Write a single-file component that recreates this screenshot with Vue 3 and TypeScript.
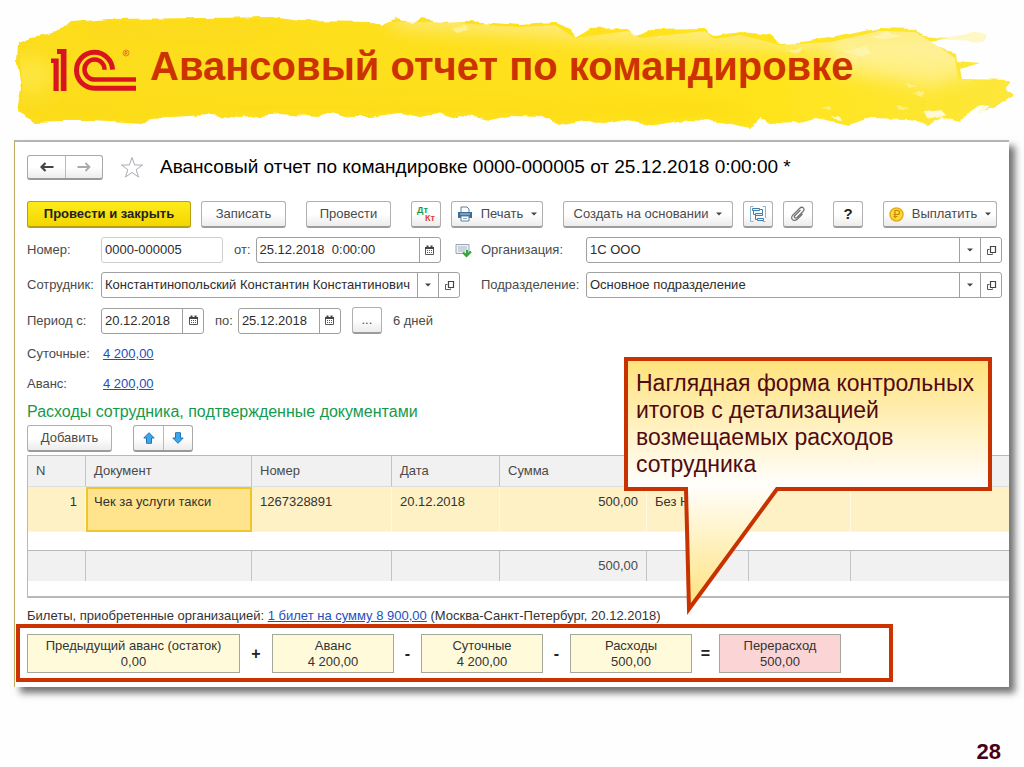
<script setup lang="ts">
import { ref } from 'vue'

interface Term {
  label: string
  value: string
  sign?: string
  over?: boolean
}

const docNumber = ref('0000-000005')
const docDate = ref('25.12.2018  0:00:00')
const employee = ref('Константинопольский Константин Константинович')
const organization = ref('1С ООО')
const department = ref('Основное подразделение')
const dateFrom = ref('20.12.2018')
const dateTo = ref('25.12.2018')

const terms: Term[] = [
  { label: 'Предыдущий аванс (остаток)', value: '0,00', sign: '+' },
  { label: 'Аванс', value: '4 200,00', sign: '-' },
  { label: 'Суточные', value: '4 200,00', sign: '-' },
  { label: 'Расходы', value: '500,00', sign: '=' },
  { label: 'Перерасход', value: '500,00', over: true },
]
</script>

<template>
  <main class="slide">
    <svg class="defs" width="0" height="0" aria-hidden="true">
      <symbol id="calendar" viewBox="0 0 11 11">
        <path d="M1.500 2.500h8v7h-8z" fill="#fff" stroke="#555" />
        <path d="M1 2h9v2H1zM2.500 0.500h2v2h-2zM6.500 0.500h2v2h-2z" fill="#444" />
        <path d="M3 5.500h5M3 7.500h5" stroke="#555" stroke-dasharray="1 1" />
      </symbol>
      <symbol id="open" viewBox="0 0 11 11">
        <path d="M4.500 1.500h5v6h-5z" fill="none" stroke="#444" stroke-width="1.200" />
        <path d="M3.500 4.500H1.500v5h5V8.500" fill="none" stroke="#555" />
      </symbol>
      <symbol id="caret" viewBox="0 0 6 4">
        <path d="M0 0.500h6L3 3.500z" fill="#444" />
      </symbol>
    </svg>

    <header class="banner">
      <svg class="brush" viewBox="0 0 1024 140" preserveAspectRatio="none" aria-hidden="true">
        <defs>
          <linearGradient id="paint" x1="0" y1="0" x2="1" y2="0">
            <stop offset="0" stop-color="#fcdd1c" />
            <stop offset="0.500" stop-color="#fee01a" />
            <stop offset="0.750" stop-color="#ffe41c" />
            <stop offset="1" stop-color="#fde73a" />
          </linearGradient>
          <filter id="rough" x="-2%" y="-10%" width="104%" height="120%">
            <feTurbulence type="fractalNoise" baseFrequency="0.060" numOctaves="2" seed="4" result="n" />
            <feDisplacementMap in="SourceGraphic" in2="n" scale="6" xChannelSelector="R" yChannelSelector="G" />
            <feGaussianBlur stdDeviation="0.700" />
          </filter>
          <filter id="soft" filterUnits="userSpaceOnUse" x="-60" y="-60" width="1144" height="260">
            <feGaussianBlur stdDeviation="9" />
          </filter>
          <clipPath id="stroke-area">
            <path d="M20 44L32 39L60 34L72 24L110 21L200 20L272 19L300 23L374 24L396 22L440 22L520 27L555 25L575 38L628 31L640 38L705 31L714 39L740 35L780 45L830 42L880 31L915 32L938 46L955 58L958 79L1004 84L1006 94L975 108L925 117L870 115L800 119L765 117L750 124L690 117L655 122L600 117L560 121L510 113L460 112L370 112L330 109L240 111L150 114L143 120L90 118L37 119L20 110L23 88L20 62z" />
          </clipPath>
        </defs>
        <g filter="url(#rough)">
          <path
            fill="url(#paint)"
            d="M18 42L30 37L58 32L70 22L110 19L200 18L272 17L300 21L374 22L380 25L396 18L414 24L422 19L440 22L470 21L520 25L555 23L568 28L575 37L582 34L590 29L628 28L634 37L641 36L650 29L705 28L714 36L740 32L772 35L780 43L800 42L830 38L880 28L915 29L922 36L950 38L930 42L940 48L955 53L956 61L980 63L960 69L962 79L1012 80L1006 89L1014 95L995 107L978 113L984 105L970 112L960 121L940 116L928 125L905 119L870 118L850 125L815 118L800 122L770 123L760 118L750 128L720 122L690 120L655 126L620 120L600 124L585 120L560 125L545 117L510 116L490 120L460 115L452 118L440 113L420 117L400 113L370 117L350 117L330 112L318 117L280 114L240 118L210 115L150 118L143 124L110 122L90 121L60 121L35 122L17 112L21 88L17 62z"
          />
          <path fill="#fdf3a0" opacity="0.600" d="M935 39L980 32L987 35L984 42L955 40z" />
          <path fill="#fff" opacity="0.800" d="M978 105L990 106L982 113L968 117zM925 112L942 110L946 114L928 119zM830 117L840 115L842 119zM870 36L885 32L902 36L884 39z" />
        </g>
        <g clip-path="url(#stroke-area)">
          <g filter="url(#soft)">
            <path fill="#fdf0a0" opacity="0.700" d="M380 10H980V60L850 56L760 48L620 42L500 34L400 28z" />
            <path fill="#fff4a6" opacity="0.700" d="M830 40L945 40L985 70L930 86L840 72z" />
            <path fill="#f9cf16" opacity="0.350" d="M30 106H460L720 104L770 116H30zM80 24H300L250 40H90z" />
            <path fill="#fff06a" opacity="0.500" d="M10 60H50V90H10z" />
          </g>
          <path filter="url(#rough)" fill="#fff7bd" opacity="0.600" d="M657 31l8 3-6 4zM785 50l18-3-4 6zM845 52l20-5 8 5-18 5zM906 82l12 4-8 2zM911 95l14-3-4 5zM895 106l14 2-10 3zM820 108l10-2 1 4zM452 28l14-4 2 6-11 3z" />
        </g>
      </svg>
      <svg class="logo" viewBox="0 0 86 44" role="img" aria-label="1С">
        <path fill="#d8151f" d="M1 9.500H8.700V42H3.500V14H1zM7 0H16.500V42H10.800V5H7z" />
        <g fill="none" stroke="#d8151f">
          <path stroke-width="5" d="M62.500 20.700A18 18 0 1 0 44.500 39.300H86" />
          <path stroke-width="4.500" d="M54.500 20.700A10 10 0 1 0 44.500 30.500H86" />
        </g>
        <circle cx="76" cy="4" r="3" fill="none" stroke="#d8651f" stroke-width="0.700" />
        <path d="M75 6V2.500H76.300C77.500 2.500 77.500 4.200 76.300 4.200H75M76.300 4.200L77.300 6" fill="none" stroke="#d8451f" stroke-width="0.600" />
      </svg>
      <h1>Авансовый отчет по командировке</h1>
    </header>

    <section class="panel">
      <div class="title-row">
        <div class="pair nav">
          <button type="button" aria-label="Назад">
            <svg width="14" height="10" viewBox="0 0 14 10"><path d="M13.500 5H3M5.500 1L1.500 5L5.500 9" fill="none" stroke="#444" stroke-width="2.200" /></svg>
          </button>
          <button type="button" aria-label="Вперед">
            <svg width="14" height="10" viewBox="0 0 14 10"><path d="M0.500 5H11M8.500 1L12.500 5L8.500 9" fill="none" stroke="#aaa" stroke-width="1.800" /></svg>
          </button>
        </div>
        <button type="button" class="star" aria-label="В избранное">
          <svg width="24" height="23" viewBox="0 0 24 23"><path d="M12 1.500L14.600 9H22.500L16.200 13.600L18.500 21L12 16.500L5.500 21L7.800 13.600L1.500 9H9.400z" fill="#fff" stroke="#a9a9b0" /></svg>
        </button>
        <h2>Авансовый отчет по командировке 0000-000005 от 25.12.2018 0:00:00 *</h2>
      </div>

      <div class="toolbar">
        <div class="group">
          <button type="button" class="btn primary">Провести и закрыть</button>
          <button type="button" class="btn medium">Записать</button>
        </div>
        <button type="button" class="btn medium">Провести</button>
        <div class="group">
          <button type="button" class="btn icon entries"><span class="debit">Дт</span><span class="credit">Кт</span></button>
          <button type="button" class="btn print">
            <svg width="16" height="16" viewBox="0 0 16 16">
              <path d="M4 6V1h6l2 2v3" fill="#fff" stroke="#5b7e9f" />
              <path d="M1 6h14v6H1z" fill="#3d6c98" />
              <path d="M3 8h10" stroke="#b8d0e4" />
              <path d="M4 10h8v5H4z" fill="#fff" stroke="#5b7e9f" />
              <path d="M6 12.500h4" stroke="#8aa6c0" />
            </svg>
            Печать
            <svg class="caret"><use href="#caret" /></svg>
          </button>
        </div>
        <div class="group">
          <button type="button" class="btn create">Создать на основании <svg class="caret"><use href="#caret" /></svg></button>
          <button type="button" class="btn icon" aria-label="Структура подчиненности">
            <svg width="16" height="16" viewBox="0 0 16 16" fill="none" stroke="#3f7eaa">
              <path d="M3.500 0.500H0.500V15.500H3.500M12.500 0.500H15.500V12M12.500 15.500H15.500" stroke="#8ab4d0" />
              <path d="M2.500 2.500h7v2h-7zM5.500 7.500h7v2h-7zM7.500 12.500h6v2h-6z" fill="#e8f2f9" />
              <path d="M9.500 3.500H12.500V7.500M3.500 4.500V8.500H5.500M5.500 9.500V13.500H7.500" />
            </svg>
          </button>
          <button type="button" class="btn icon" aria-label="Присоединенные файлы">
            <svg width="16" height="16" viewBox="0 0 16 16" fill="none" stroke="#707070" stroke-width="1.200"><path d="M12.500 8L7.500 13C3.500 16.500 -0.500 12.500 3 9L9.500 2.500C12.500 -0.500 15.500 3 13 5.500L7 11.500C5 13 3.500 11 5 9.500L10.500 4" /></svg>
          </button>
        </div>
        <button type="button" class="btn icon help">?</button>
        <button type="button" class="btn pay">
          <svg width="15" height="15" viewBox="0 0 15 15">
            <circle cx="7.500" cy="7.500" r="6.500" fill="#ffd83a" stroke="#e6ae14" stroke-width="1.500" />
            <path d="M6 11.500V3.500H8.500C11.200 3.500 11.200 7.500 8.500 7.500H4.500M4.500 9.500H8.500" fill="none" stroke="#c48a00" stroke-width="1.200" />
          </svg>
          Выплатить
          <svg class="caret"><use href="#caret" /></svg>
        </button>
      </div>

      <div class="form">
        <label for="number">Номер:</label>
        <div class="line">
          <div class="field number"><input id="number" v-model="docNumber" type="text" /></div>
          <label class="joint" for="date">от:</label>
          <div class="field stamp">
            <input id="date" v-model="docDate" type="text" />
            <button type="button" aria-label="Выбрать дату"><svg class="glyph"><use href="#calendar" /></svg></button>
          </div>
          <svg class="posted" width="17" height="15" viewBox="0 0 17 15">
            <path d="M1 1.500h13v9H1z" fill="#eef1f5" stroke="#9aa5b5" />
            <path d="M3 4h9M3 6h9M3 8h7" stroke="#a9b6c6" />
            <path d="M8 9.500L11.500 13L16 8.500M12 7V13" fill="none" stroke="#35a63e" stroke-width="2.200" />
          </svg>
        </div>
        <label for="org">Организация:</label>
        <div class="field">
          <input id="org" v-model="organization" type="text" />
          <button type="button" aria-label="Выбрать организацию"><svg class="caret"><use href="#caret" /></svg></button>
          <button type="button" aria-label="Открыть организацию"><svg class="glyph"><use href="#open" /></svg></button>
        </div>

        <label for="employee">Сотрудник:</label>
        <div class="field employee">
          <input id="employee" v-model="employee" type="text" />
          <button type="button" aria-label="Выбрать сотрудника"><svg class="caret"><use href="#caret" /></svg></button>
          <button type="button" aria-label="Открыть сотрудника"><svg class="glyph"><use href="#open" /></svg></button>
        </div>
        <label for="dept">Подразделение:</label>
        <div class="field">
          <input id="dept" v-model="department" type="text" />
          <button type="button" aria-label="Выбрать подразделение"><svg class="caret"><use href="#caret" /></svg></button>
          <button type="button" aria-label="Открыть подразделение"><svg class="glyph"><use href="#open" /></svg></button>
        </div>

        <label for="from">Период с:</label>
        <div class="line">
          <div class="field day">
            <input id="from" v-model="dateFrom" type="text" />
            <button type="button" aria-label="Выбрать начало"><svg class="glyph"><use href="#calendar" /></svg></button>
          </div>
          <label class="joint" for="to">по:</label>
          <div class="field day">
            <input id="to" v-model="dateTo" type="text" />
            <button type="button" aria-label="Выбрать конец"><svg class="glyph"><use href="#calendar" /></svg></button>
          </div>
          <button type="button" class="btn icon more">...</button>
          <span>6 дней</span>
        </div>
      </div>

      <dl class="amounts">
        <dt>Суточные:</dt>
        <dd><a href="#">4 200,00</a></dd>
        <dt>Аванс:</dt>
        <dd><a href="#">4 200,00</a></dd>
      </dl>

      <h3>Расходы сотрудника, подтвержденные документами</h3>

      <div class="commands">
        <button type="button" class="btn medium">Добавить</button>
        <div class="pair">
          <button type="button" aria-label="Вверх">
            <svg width="12" height="12" viewBox="0 0 12 12"><path d="M6 0.700L11.200 6H8.500V11.300H3.500V6H0.800z" fill="#3aa8ee" stroke="#2374b4" /></svg>
          </button>
          <button type="button" aria-label="Вниз">
            <svg width="12" height="12" viewBox="0 0 12 12"><path d="M6 11.300L11.200 6H8.500V0.700H3.500V6H0.800z" fill="#3aa8ee" stroke="#2374b4" /></svg>
          </button>
        </div>
      </div>

      <div class="grid">
        <table>
          <colgroup>
            <col class="c-n" /><col class="c-doc" /><col class="c-num" /><col class="c-date" />
            <col class="c-sum" /><col class="c-vat" /><col class="c-vat" /><col />
          </colgroup>
          <thead>
            <tr><th>N</th><th>Документ</th><th>Номер</th><th>Дата</th><th>Сумма</th><th></th><th></th><th></th></tr>
          </thead>
          <tbody>
            <tr class="current">
              <td class="right">1</td>
              <td class="active">Чек за услуги такси</td>
              <td>1267328891</td>
              <td>20.12.2018</td>
              <td class="right">500,00</td>
              <td>Без НДС</td>
              <td></td>
              <td></td>
            </tr>
            <tr class="blank"><td colspan="8"></td></tr>
          </tbody>
          <tfoot>
            <tr><td></td><td></td><td></td><td></td><td class="right">500,00</td><td></td><td></td><td></td></tr>
          </tfoot>
        </table>
      </div>

      <p class="tickets">
        Билеты, приобретенные организацией:
        <a href="#">1 билет на сумму 8 900,00</a>
        (Москва-Санкт-Петербург, 20.12.2018)
      </p>

      <div class="totals">
        <template v-for="term in terms" :key="term.label">
          <div class="term" :class="{ over: term.over }">
            <span>{{ term.label }}</span>
            <span>{{ term.value }}</span>
          </div>
          <b v-if="term.sign">{{ term.sign }}</b>
        </template>
      </div>

      <aside class="callout">
        <svg viewBox="0 0 368 258" aria-hidden="true">
          <defs>
            <linearGradient id="note" x1="0" y1="0" x2="0" y2="1">
              <stop offset="0" stop-color="#ffe27a" />
              <stop offset="0.500" stop-color="#fffefc" />
              <stop offset="1" stop-color="#ffe27a" />
            </linearGradient>
          </defs>
          <path d="M2 2H366V132H153L65 252L62 132H2z" fill="url(#note)" stroke="#c83200" stroke-width="4" stroke-miterlimit="10" />
        </svg>
        <p>Наглядная форма контрольных итогов с детализацией возмещаемых расходов сотрудника</p>
      </aside>
    </section>

    <footer>28</footer>
  </main>
</template>

<style>
body {
  margin: 0;
  background: #fff;
}
</style>

<style scoped>
* {
  box-sizing: border-box;
}
.slide {
  display: flex;
  flex-direction: column;
  min-height: 100vh;
  background: #fefefe;
  font-family: "Liberation Sans", Arial, sans-serif;
  font-size: 13px;
  line-height: 16px;
  color: #4a4a4a;
}
.defs {
  position: absolute;
}
svg {
  flex: none;
}
h1,
h2,
h3,
p,
dl,
dd {
  margin: 0;
}
button,
input {
  font: inherit;
  color: inherit;
}
button {
  display: flex;
  align-items: center;
  justify-content: center;
  padding: 0;
  border: 0;
  background: none;
}
a {
  color: #1d4fc0;
}
.banner {
  position: relative;
  display: flex;
  align-items: flex-start;
  gap: 14px;
  height: 140px;
  padding: 0 50px;
}
.brush {
  position: absolute;
  inset: 0;
  width: 100%;
  height: 100%;
}
.logo {
  position: relative;
  width: 86px;
  height: 44px;
  margin-top: 49px;
}
h1 {
  position: relative;
  margin-top: 44px;
  font-size: 40px;
  line-height: 44px;
  color: #cc3300;
  white-space: nowrap;
}
.panel {
  position: relative;
  margin: 0 15px 0 14px;
  padding-bottom: 5px;
  border-top: 2px solid #b5b5b5;
  border-left: 1px solid #c0ad62;
  background: #fff;
  box-shadow: 6px 6px 7px rgba(0, 0, 0, 0.55);
}
.title-row {
  display: flex;
  align-items: center;
  padding: 12px 12px 0;
}
.pair {
  display: flex;
  border: 1px solid #a9a9a9;
  border-bottom: 2px solid #999;
  border-radius: 3px;
  background: linear-gradient(#fff 50%, #ececec);
}
.pair button {
  width: 29px;
  height: 24px;
}
.pair.nav button {
  width: 37px;
  height: 22px;
}
.pair button + button {
  border-left: 1px solid #bbb;
}
.star {
  margin: 0 16px 0 17px;
}
h2 {
  font-size: 19px;
  line-height: 26px;
  font-weight: 400;
  color: #000;
  white-space: nowrap;
}
.toolbar {
  display: flex;
  gap: 20px;
  padding: 21px 12px 0;
}
.group {
  display: flex;
  gap: 10px;
}
.btn {
  gap: 8px;
  height: 27px;
  border: 1px solid #b0b0b0;
  border-bottom: 2px solid #9c9c9c;
  border-radius: 3px;
  background: linear-gradient(#fff 50%, #ececec);
  white-space: nowrap;
}
.btn.primary {
  width: 164px;
  border-color: #b5a014;
  background: linear-gradient(#ffea1c, #f3d700);
  font-weight: 700;
  color: #222;
}
.btn.medium {
  width: 85px;
}
.btn.icon {
  width: 30px;
}
.btn.print {
  width: 92px;
}
.btn.create {
  width: 170px;
}
.btn.pay {
  width: 114px;
}
.btn.help {
  font-size: 15px;
  font-weight: 700;
  color: #222;
}
.btn.more {
  margin: 0 11px;
}
.btn.entries {
  flex-wrap: wrap;
  align-content: center;
  gap: 0;
  padding: 0 5px;
  font-size: 9px;
  line-height: 8px;
  font-weight: 700;
}
.debit {
  width: 100%;
  text-align: left;
  color: #159a4c;
}
.credit {
  width: 100%;
  text-align: right;
  color: #e0433a;
}
.caret {
  width: 6px;
  height: 4px;
}
.glyph {
  width: 11px;
  height: 11px;
}
.form {
  display: grid;
  grid-template-columns: 74px 380px 105px 1fr;
  align-items: center;
  row-gap: 9px;
  padding: 9px 7px 0 12px;
}
.line {
  display: flex;
  align-items: center;
}
.joint {
  margin: 0 5px 0 11px;
}
.field {
  display: flex;
  height: 26px;
  border: 1px solid #a0a0a0;
  border-radius: 3px;
  background: #fff;
}
.field.number {
  width: 122px;
  border-color: #cfcfcf;
}
.field.stamp {
  width: 185px;
}
.field.employee {
  width: 359px;
}
.field.day {
  width: 103px;
}
.field input {
  flex: 1;
  width: 0;
  min-width: 0;
  padding: 0 3px;
  border: 0;
  outline: 0;
  background: none;
  color: #2d2d2d;
  white-space: pre;
}
.field button {
  width: 21px;
  border-left: 1px solid #a0a0a0;
}
.posted {
  margin-left: 14px;
}
.amounts {
  display: grid;
  grid-template-columns: 76px 1fr;
  row-gap: 14px;
  padding: 12px 12px 0;
}
h3 {
  padding: 10px 12px 0;
  font-size: 16px;
  line-height: 20px;
  font-weight: 400;
  color: #159a4c;
}
.commands {
  display: flex;
  gap: 21px;
  padding: 3px 12px 0;
}
.grid {
  margin: 3px 0 0 12px;
  padding-bottom: 15px;
  border: solid #b9b9b9;
  border-width: 1px 0 2px 1px;
}
table {
  width: 100%;
  table-layout: fixed;
  border-collapse: separate;
  border-spacing: 0;
}
.c-n {
  width: 58px;
}
.c-doc {
  width: 166px;
}
.c-num {
  width: 140px;
}
.c-date {
  width: 108px;
}
.c-sum {
  width: 147px;
}
.c-vat {
  width: 102px;
}
th,
td {
  padding: 0 8px;
  border-right: 1px solid #c4c4c4;
  text-align: left;
  font-weight: 400;
  white-space: nowrap;
}
th:last-child,
td:last-child {
  border-right: 0;
}
thead th {
  height: 31px;
  background: #f1f1f1;
  border-bottom: 1px solid #dedede;
}
.current td {
  height: 45px;
  padding-top: 7px;
  vertical-align: top;
  border-right-color: #fff8e2;
  border-bottom: 1px solid #fdf6dc;
  background: #fdf1c5;
  color: #333;
}
.current .active {
  padding: 5px 6px;
  border: 2px solid #efc52e;
  background: #ffe48d;
}
.blank td {
  height: 18px;
  padding: 0;
}
tfoot td {
  height: 31px;
  border-top: 1px solid #b9b9b9;
  background: #f1f1f1;
}
.right {
  text-align: right;
}
.tickets {
  padding: 10px 12px 0;
  color: #333;
}
.totals {
  display: flex;
  width: fit-content;
  margin: 0 0 0 1px;
  padding: 6px 48px 5px 7px;
  border: 4px solid #cc3300;
}
.term {
  display: flex;
  flex-direction: column;
  align-items: center;
  justify-content: center;
  width: 122px;
  height: 39px;
  border: 1px solid #a3a89a;
  background: #fffbda;
  color: #333;
}
.term:first-child {
  width: 213px;
}
.term.over {
  background: #fbd5d5;
}
.totals b {
  width: 27px;
  line-height: 39px;
  font-size: 16px;
  text-align: center;
  color: #222;
}
.totals .term:first-child + b {
  width: 32px;
}
.callout {
  position: absolute;
  top: 215px;
  right: 17px;
  width: 368px;
}
.callout svg {
  display: block;
  width: 368px;
  height: 258px;
}
.callout p {
  position: absolute;
  top: 13px;
  left: 12px;
  right: 10px;
  font-size: 23px;
  line-height: 27px;
  color: #500a10;
}
footer {
  margin-top: auto;
  padding: 0 23px 3px;
  text-align: right;
  font-size: 22px;
  line-height: 24px;
  font-weight: 700;
  color: #4a0014;
}
</style>
